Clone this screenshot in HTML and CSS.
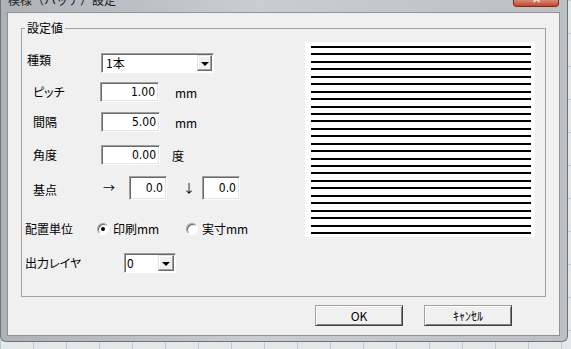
FILE: index.html
```html
<!DOCTYPE html>
<html lang="ja">
<head>
    <meta charset="UTF-8">
    <meta name="viewport" content="width=device-width, initial-scale=1.0">
    <title>模様（ハッチ）設定</title>
    <link rel="stylesheet" href="styles.css">
</head>
<body>
    <div class="window">
        <div class="titlebar">
            <span class="title">模様（ハッチ）設定</span>
            <div class="close-btn"><span class="close-x">✕</span></div>
        </div>

        <div class="client">
            <div class="group">
                <span class="group-label">設定値</span>

                <div class="form">
                    <!-- 種類 -->
                    <div class="row row-kind">
                        <span class="label label-kind">種類</span>
                        <div class="combo combo-wide">
                            <span class="combo-text">1本</span>
                            <span class="combo-btn"><i class="tri"></i></span>
                        </div>
                    </div>

                    <div class="row row-pitch">
                        <span class="label label-pitch kana">ピッチ</span>
                        <input class="field" type="text" value="1.00" readonly>
                        <span class="unit unit-pitch">mm</span>
                    </div>

                    <div class="row row-gap">
                        <span class="label label-std">間隔</span>
                        <input class="field" type="text" value="5.00" readonly>
                        <span class="unit unit-gap">mm</span>
                    </div>

                    <div class="row row-angle">
                        <span class="label label-std">角度</span>
                        <input class="field" type="text" value="0.00" readonly>
                        <span class="unit unit-angle">度</span>
                    </div>

                    <!-- 基点 -->
                    <div class="row row-base">
                        <span class="label label-base">基点</span>
                        <span class="arrow arrow-right">→</span>
                        <input class="field field-small" type="text" value="0.0" readonly>
                        <span class="arrow arrow-down">↓</span>
                        <input class="field field-small" type="text" value="0.0" readonly>
                    </div>

                    <div class="row row-unit">
                        <span class="label label-unit">配置単位</span>
                        <span class="radio-item">
                            <span class="radio checked"></span>
                            <span>印刷mm</span>
                        </span>
                        <span class="radio-item">
                            <span class="radio"></span>
                            <span>実寸mm</span>
                        </span>
                    </div>

                    <div class="row row-layer">
                        <span class="label label-layer kana">出力レイヤ</span>
                        <div class="combo combo-small">
                            <span class="combo-text">0</span>
                            <span class="combo-btn"><i class="tri"></i></span>
                        </div>
                    </div>
                </div>

                <!-- プレビュー -->
                <div class="preview">
                    <svg width="230" height="195" viewBox="0 0 230 195" shape-rendering="crispEdges">
                        <path fill="#000" d="M6 4h220v2H6z M6 11h220v2H6z M6 19h220v2H6z M6 26h220v2H6z M6 34h220v2H6z M6 41h220v2H6z M6 49h220v2H6z M6 56h220v2H6z M6 64h220v2H6z M6 71h220v2H6z M6 78h220v2H6z M6 86h220v2H6z M6 93h220v2H6z M6 101h220v2H6z M6 108h220v2H6z M6 116h220v2H6z M6 123h220v2H6z M6 130h220v2H6z M6 138h220v2H6z M6 145h220v2H6z M6 153h220v2H6z M6 160h220v2H6z M6 168h220v2H6z M6 175h220v2H6z M6 183h220v2H6z M6 190h220v2H6z"/>
                    </svg>
                </div>
            </div>

            <div class="footer">
                <button class="btn">OK</button>
                <button class="btn">ｷｬﾝｾﾙ</button>
            </div>
        </div>
    </div>
</body>
</html>
```

FILE: styles.css
```css
body {
    margin: 0;
    font-family: "Noto Sans CJK JP", sans-serif;
    font-size: 12px;
    color: #000;
    background-color: #e4e8e8;
    background-image:
        linear-gradient(90deg, rgba(90, 170, 170, 0.35) 1px, transparent 1px),
        linear-gradient(rgba(90, 170, 170, 0.35) 1px, transparent 1px);
    background-size: 33px 33px;
}

/* ウィンドウ枠 */
.window {
    width: 568px;
    height: 342px;
    box-sizing: border-box;
    background: linear-gradient(90deg, #aeb2b6, #c9cdd1 45%, #bcc0c4);
    border: 1px solid #6f7377;
    border-top: none;
    border-radius: 0 0 6px 6px;
}

.titlebar {
    height: 12px;
    display: flex;
    justify-content: space-between;
    padding: 0 8px 0 7px;
    overflow: hidden;
}

.title {
    margin-top: -7px;
    line-height: 14px;
    color: #1c1c1c;
}

.close-btn {
    width: 46px;
    height: 7px;
    box-sizing: border-box;
    background: linear-gradient(#d98a76, #c4472e);
    border: 1px solid #7c2b1f;
    border-top: none;
    border-radius: 0 0 4px 4px;
    display: flex;
    justify-content: center;
    overflow: hidden;
}

.close-x {
    color: #f4e6e2;
    font-size: 11px;
    line-height: 11px;
    margin-top: -7px;
    font-weight: bold;
}

.client {
    margin-left: 6px;
    width: 553px;
    height: 324px;
    box-sizing: border-box;
    border: 1px solid #8e9296;
    background-color: #f0f0f0;
}

/* グループボックス */
.group {
    position: relative;
    margin: 15px 0 0 13px;
    width: 525px;
    height: 269px;
    box-sizing: border-box;
    border: 1px solid #a0a0a0;
    display: flex;
}

.group-label {
    position: absolute;
    left: 3px;
    top: -9px;
    padding: 0 2px;
    line-height: 16px;
    background-color: #f0f0f0;
}

.form {
    width: 283px;
    flex: none;
    display: flex;
    flex-direction: column;
}

.row {
    display: flex;
    align-items: center;
    height: 20px;
}

.row-kind { margin-top: 24px; }
.row-pitch { margin-top: 9px; }
.row-gap { margin-top: 10px; }
.row-angle { margin-top: 13px; }
.row-base { margin-top: 11px; height: 24px; }
.row-unit { margin-top: 19px; }
.row-layer { margin-top: 14px; }

.label {
    flex: none;
    box-sizing: border-box;
    line-height: 14px;
}

.kana {
    font-feature-settings: "palt";
}

.label-kind { width: 79px; padding-left: 5px; align-self: flex-start; }
.label-pitch { width: 78px; padding-left: 11px; }
.label-std { width: 79px; padding-left: 11px; }
.label-base { width: 81px; padding-left: 11px; margin-top: 4px; }
.label-unit { width: 75px; padding-left: 3px; }
.label-layer { width: 102px; padding-left: 3px; }

/* 入力欄 */
.field {
    width: 59px;
    height: 20px;
    margin: 0;
    box-sizing: border-box;
    border: 1px solid;
    border-color: #a0a0a0 #ffffff #ffffff #a0a0a0;
    box-shadow: inset 1px 1px #696969, inset -1px -1px #e3e3e3;
    background-color: #fff;
    padding: 0 3px 0 0;
    text-align: right;
    font-family: "Liberation Sans Narrow", "DejaVu Sans Condensed", "Liberation Sans", sans-serif;
    font-size: 12px;
    color: #000;
    outline: none;
}

.field-small {
    width: 38px;
    height: 24px;
}

.unit-pitch { margin-left: 16px; }
.unit-gap { margin-left: 15px; }
.unit-angle { margin-left: 12px; }

.arrow {
    flex: none;
    line-height: 14px;
}

.arrow-right { width: 26px; }
.arrow-down { width: 19px; margin-left: 16px; }

/* コンボボックス */
.combo {
    display: flex;
    height: 20px;
    box-sizing: border-box;
    border: 1px solid;
    border-color: #a0a0a0 #ffffff #ffffff #a0a0a0;
    padding: 1px;
    background-color: #fff;
    box-shadow: inset 1px 1px #696969;
}

.combo-wide { width: 113px; }
.combo-small { width: 52px; }

.combo-text {
    flex: 1;
    padding-left: 3px;
    line-height: 16px;
}

.combo-small .combo-text {
    padding-left: 1px;
}

.combo-btn {
    width: 15px;
    height: 16px;
    box-sizing: border-box;
    border: 1px solid;
    border-color: #e3e3e3 #696969 #696969 #e3e3e3;
    box-shadow: inset -1px -1px #a0a0a0, inset 1px 1px #ffffff;
    background-color: #f0f0f0;
    display: flex;
    align-items: center;
    justify-content: center;
}

.combo-small .combo-btn {
    width: 16px;
}

.tri {
    width: 0;
    height: 0;
    border-left: 4px solid transparent;
    border-right: 4px solid transparent;
    border-top: 4px solid #000;
    margin-top: 1px;
}

/* ラジオボタン */
.radio-item {
    width: 89px;
    display: flex;
    align-items: center;
    gap: 4px;
    line-height: 14px;
}

.radio {
    width: 12px;
    height: 12px;
    box-sizing: border-box;
    border-radius: 50%;
    border: 1px solid;
    border-color: #a0a0a0 #ffffff #ffffff #a0a0a0;
    box-shadow: inset 1px 1px #696969;
    background-color: #fff;
    display: flex;
    align-items: center;
    justify-content: center;
}

.radio.checked::after {
    content: "";
    width: 4px;
    height: 4px;
    border-radius: 50%;
    background-color: #000;
}

.preview {
    margin-top: 13px;
    width: 230px;
    height: 195px;
    background-color: #fff;
}

.preview svg {
    display: block;
}

/* ボタン */
.footer {
    display: flex;
    justify-content: flex-end;
    gap: 21px;
    padding-right: 47px;
    margin-top: 8px;
}

.btn {
    width: 88px;
    height: 21px;
    margin: 0;
    padding: 0;
    box-sizing: border-box;
    border: 1px solid;
    border-color: #a0a0a0 #404040 #404040 #a0a0a0;
    box-shadow: inset 1px 1px #ffffff, inset -1px -1px #808080;
    background-color: #f0f0f0;
    font-family: "Noto Sans CJK JP", sans-serif;
    font-size: 12px;
    color: #000;
    line-height: 17px;
}
```
